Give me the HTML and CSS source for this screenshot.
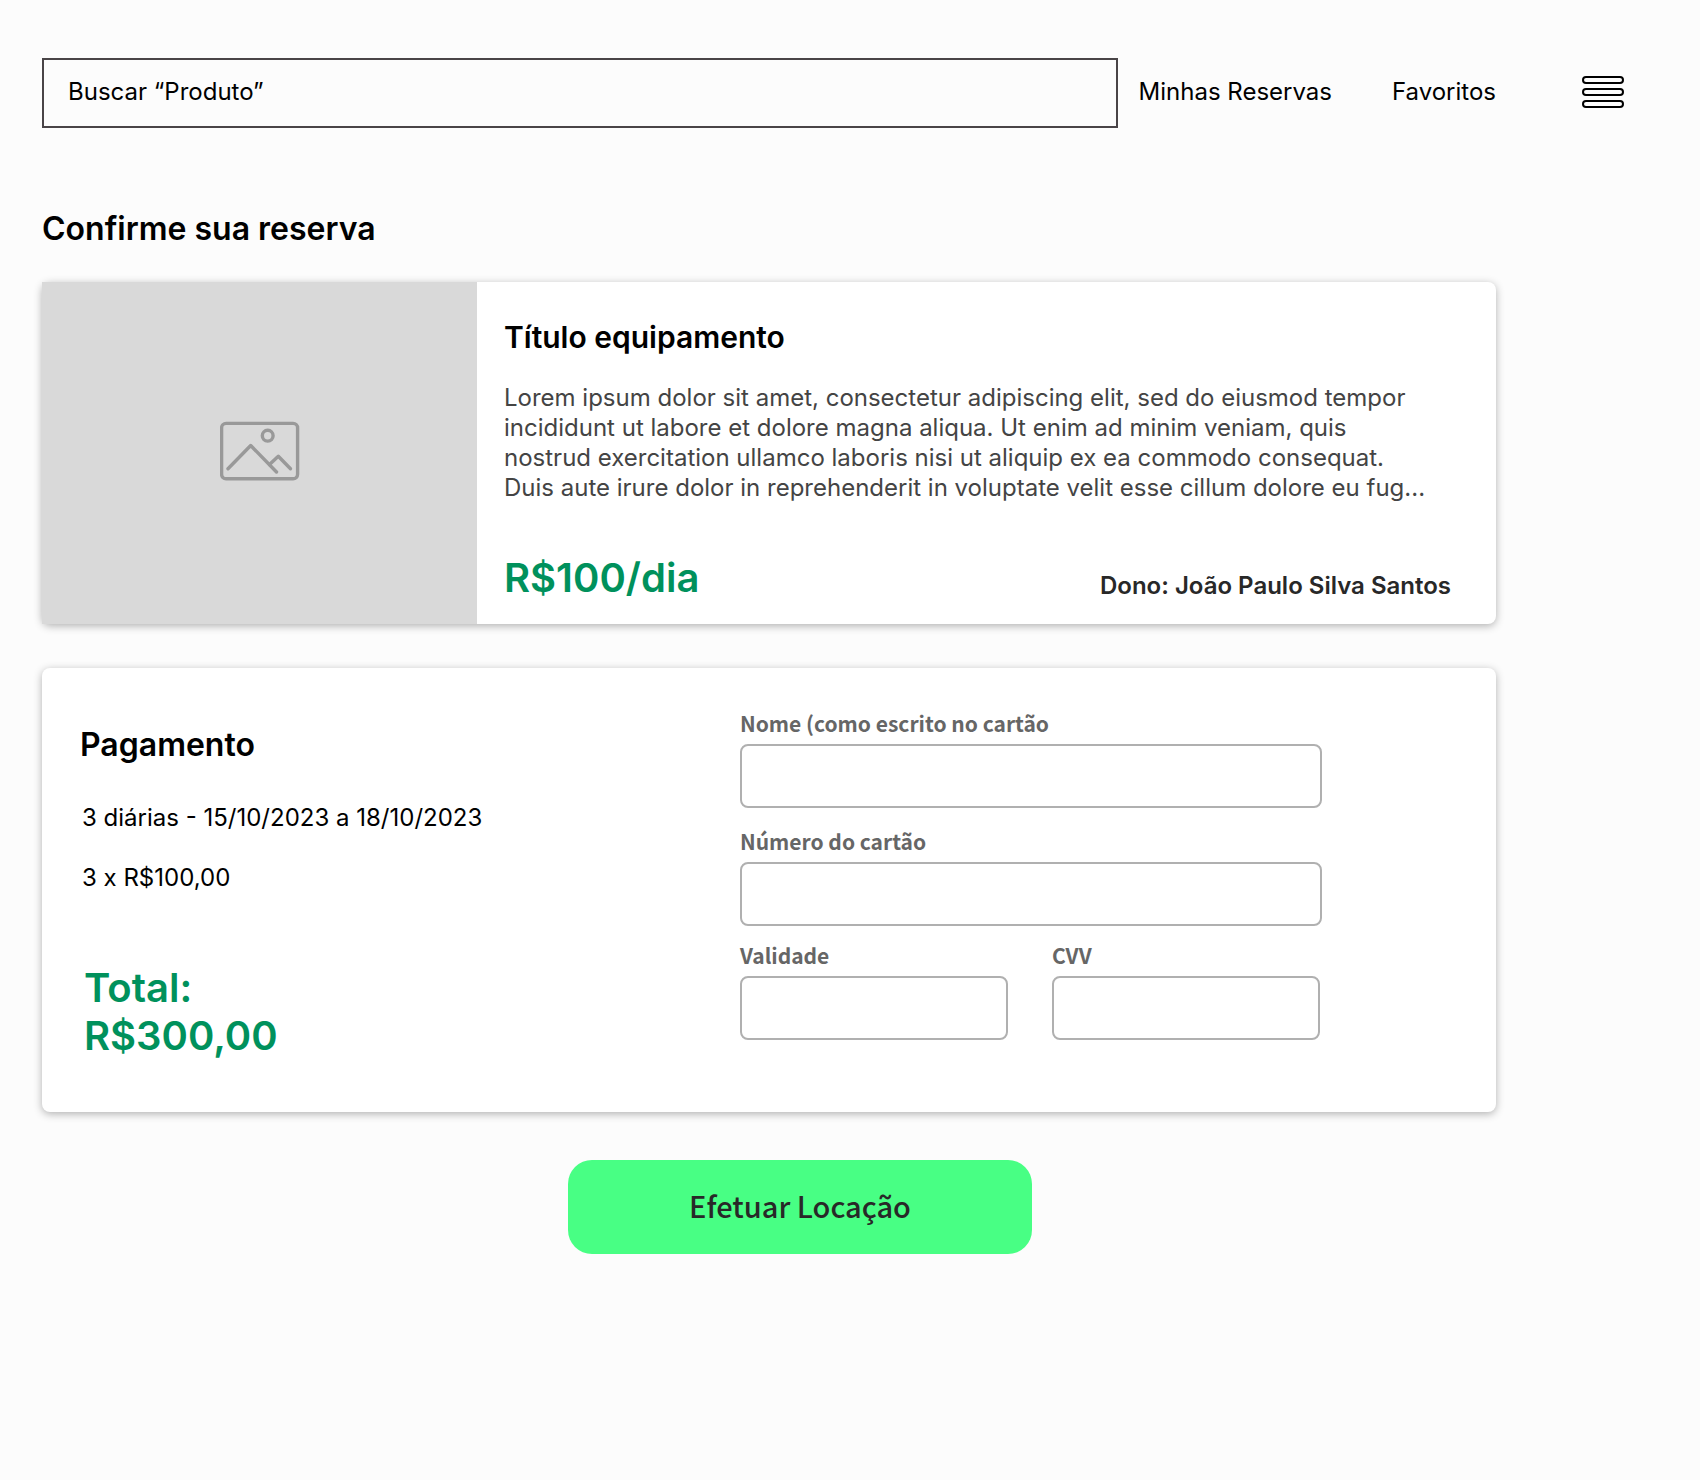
FILE: index.html
```html
<!DOCTYPE html>
<html lang="pt-BR">
<head>
  <meta charset="utf-8">
  <meta name="viewport" content="width=device-width, initial-scale=1">
  <title>Confirme sua reserva</title>
  <link rel="stylesheet" href="styles.css">
</head>
<body>
  <header class="topbar">
    <input class="search" type="search" aria-label="Buscar produto" placeholder="Buscar “Produto”">
    <nav class="nav">
      <a href="#reservas">Minhas Reservas</a>
      <a href="#favoritos">Favoritos</a>
    </nav>
    <button class="menu" type="button" aria-label="Menu">
      <svg width="42" height="32" viewBox="0 0 42 32" fill="none" stroke="#000" stroke-width="2">
        <rect x="1" y="1" width="40" height="6" rx="3"/>
        <rect x="1" y="13" width="40" height="6" rx="3"/>
        <rect x="1" y="25" width="40" height="6" rx="3"/>
      </svg>
    </button>
  </header>

  <main class="page">
    <h1 class="heading">Confirme sua reserva</h1>

    <article class="card product">
      <div class="product-image">
        <svg width="80" height="64" viewBox="0 0 80 64" fill="none" stroke="#999" stroke-width="3.4" stroke-linecap="round" stroke-linejoin="round">
          <rect x="1.6" y="2.4" width="76" height="55.4" rx="4.5"/>
          <circle cx="47.7" cy="14.7" r="5.4"/>
          <path d="M8 47.7 30.7 24.5 56.5 51"/>
          <path d="M49.5 43.5 58.3 35.2 70.5 47.7"/>
        </svg>
      </div>
      <div class="product-info">
        <h2 class="product-title">Título equipamento</h2>
        <p class="description">Lorem ipsum dolor sit amet, consectetur adipiscing elit, sed do eiusmod tempor incididunt ut labore et dolore magna aliqua. Ut enim ad minim veniam, quis nostrud exercitation ullamco laboris nisi ut aliquip ex ea commodo consequat. Duis aute irure dolor in reprehenderit in voluptate velit esse cillum dolore eu fug...</p>
        <div class="product-footer">
          <strong class="price">R$100/dia</strong>
          <span class="owner">Dono: João Paulo Silva Santos</span>
        </div>
      </div>
    </article>

    <form class="payment-form" action="#">
      <section class="card payment">
        <div class="summary">
          <h2 class="heading">Pagamento</h2>
          <div class="summary-lines">
            <p>3 diárias - 15/10/2023 a 18/10/2023</p>
            <p>3 x R$100,00</p>
          </div>
          <p class="price total">Total:<br>R$300,00</p>
        </div>
        <div class="fields">
          <div class="field">
            <label for="nome">Nome (como escrito no cartão</label>
            <input id="nome" type="text" autocomplete="cc-name">
          </div>
          <div class="field">
            <label for="numero">Número do cartão</label>
            <input id="numero" type="text" inputmode="numeric" autocomplete="cc-number">
          </div>
          <div class="field-row">
            <div class="field">
              <label for="validade">Validade</label>
              <input id="validade" type="text" autocomplete="cc-exp">
            </div>
            <div class="field">
              <label for="cvv">CVV</label>
              <input id="cvv" type="text" inputmode="numeric" autocomplete="cc-csc">
            </div>
          </div>
        </div>
      </section>
      <button class="submit" type="submit">Efetuar Locação</button>
    </form>
  </main>
</body>
</html>
```
FILE: styles.css
```css
*,
*::before,
*::after {
  box-sizing: border-box;
}

body {
  margin: 0;
  background: #fcfcfc;
  color: #000;
  font-family: Inter, sans-serif;
  font-size: 24px;
  line-height: 30px;
}

h1,
h2,
p {
  margin: 0;
}

.topbar {
  display: flex;
  align-items: center;
  padding: 58px 76px 0 42px;
}

.search {
  flex: 1;
  min-width: 0;
  height: 70px;
  margin-right: 21px;
  padding: 0 24px 4px;
  border: 2px solid #494447;
  border-radius: 0;
  background: transparent;
  font: inherit;
  appearance: none;
}

.search::placeholder {
  color: #000;
  opacity: 1;
}

.nav {
  display: flex;
  gap: 60px;
  padding-bottom: 2px;
}

.nav a {
  color: inherit;
  text-decoration: none;
  white-space: nowrap;
}

.menu {
  display: flex;
  margin-left: 86px;
  padding: 0 0 2px;
  border: 0;
  background: none;
  cursor: pointer;
}

.page {
  padding: 81px 204px 80px 42px;
}

.heading {
  font-size: 32px;
  font-weight: 600;
  line-height: 40px;
}

.card {
  border-radius: 8px;
  background: #fff;
  box-shadow: 0 2px 8px rgba(0, 0, 0, 0.3);
}

.product {
  display: flex;
  margin-top: 33px;
}

.product-image {
  display: flex;
  flex: 0 0 435px;
  align-items: center;
  justify-content: center;
  background: #d9d9d9;
}

.product-info {
  flex: 1;
  padding: 36px 45px 22px 27px;
}

.product-title {
  font-size: 30px;
  font-weight: 600;
  line-height: 38px;
}

.description {
  margin-top: 27px;
  padding-right: 20px;
  color: #444;
}

.product-footer {
  display: flex;
  align-items: flex-end;
  justify-content: space-between;
  margin-top: 51px;
}

.price {
  color: #00915c;
  font-size: 40px;
  font-weight: 600;
  line-height: 48px;
}

.owner {
  padding-bottom: 1px;
  color: #282828;
  font-weight: 600;
}

.payment {
  display: grid;
  grid-template-columns: 660px 1fr;
  margin-top: 44px;
  padding: 40px 174px 52px 38px;
}

.summary {
  padding-top: 17px;
}

.summary-lines {
  display: grid;
  gap: 30px;
  margin-top: 38px;
  padding-left: 2px;
}

.total {
  margin-top: 71px;
  padding-left: 4px;
}

.fields {
  display: grid;
  align-content: start;
  gap: 14px;
}

.field {
  display: grid;
  gap: 6px;
}

.field + .field {
  margin-top: 4px;
}

.field label {
  color: #666;
  font-family: "Noto Sans CJK JP", sans-serif;
  font-size: 21px;
  font-weight: 700;
  line-height: 30px;
}

.field input {
  width: 100%;
  height: 64px;
  padding: 0 16px;
  border: 2px solid #b0b0b0;
  border-radius: 8px;
  background: #fff;
  font: inherit;
}

.field-row {
  display: grid;
  grid-template-columns: 1fr 1fr;
  gap: 44px;
  padding-right: 2px;
}

.field-row .field {
  margin-top: 0;
}

.payment-form {
  display: flex;
  flex-direction: column;
}

.submit {
  align-self: center;
  width: 464px;
  height: 94px;
  margin: 48px 0 0 62px;
  padding: 0 0 4px;
  border: 0;
  border-radius: 24px;
  background: #48ff84;
  color: #282828;
  font-family: "Noto Sans CJK JP", sans-serif;
  font-size: 29px;
  font-weight: 500;
  cursor: pointer;
}
```
